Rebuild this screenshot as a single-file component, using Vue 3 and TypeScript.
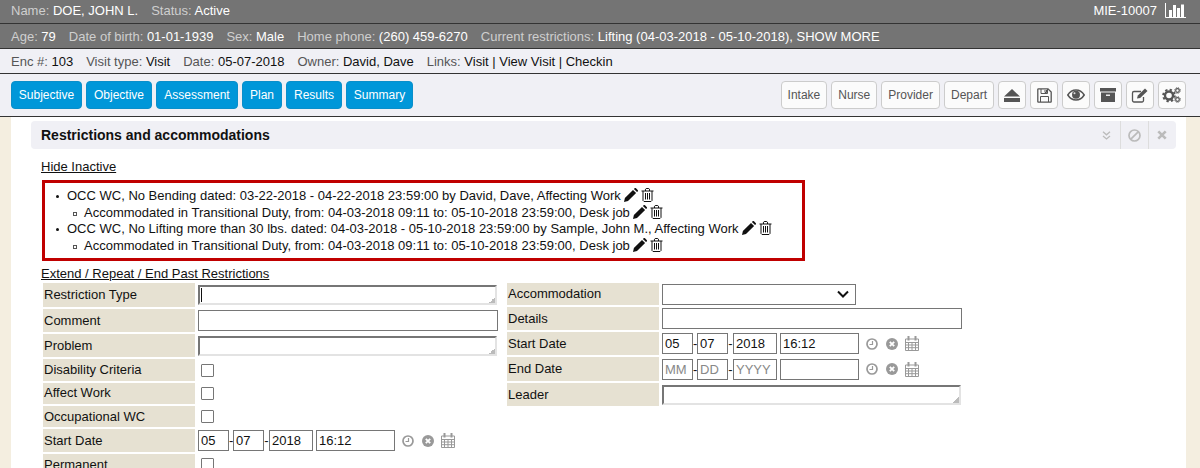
<template>
  <div class="page">
    <div class="banner">
      <div class="line dark first">
        <span>Name: <b>DOE, JOHN L.</b></span>
        <span>Status: <b>Active</b></span>
        <span class="mrn">MIE-10007</span>
        <svg class="chart" width="21" height="15" viewBox="0 0 21 15">
          <path d="M.5 0v14.500H21" fill="none" stroke="#fff" />
          <path d="M4 7h3v7H4zM8 2h3v12H8zM12 5h3v9h-3zM16 1.500h3V14h-3z" fill="#fff" />
        </svg>
      </div>
      <div class="line dark second">
        <span>Age: <b>79</b></span>
        <span>Date of birth: <b>01-01-1939</b></span>
        <span>Sex: <b>Male</b></span>
        <span>Home phone: <b>(260) 459-6270</b></span>
        <span>Current restrictions: <b>Lifting (04-03-2018 - 05-10-2018), SHOW MORE</b></span>
      </div>
      <div class="line light">
        <span>Enc #: <b>103</b></span>
        <span>Visit type: <b>Visit</b></span>
        <span>Date: <b>05-07-2018</b></span>
        <span>Owner: <b>David, Dave</b></span>
        <span>Links: <b>Visit | View Visit | Checkin</b></span>
      </div>
    </div>

    <div class="toolbar">
      <button v-for="tab in tabs" :key="tab.label" class="tab" :style="{ width: tab.width + 'px' }">
        {{ tab.label }}
      </button>
      <span class="spacer"></span>
      <button v-for="step in steps" :key="step" class="tool">{{ step }}</button>
      <button class="tool icon">
        <svg width="16" height="13" viewBox="0 0 16 13"><path d="M8 0l8 7.500H0zM0 9h16v4H0z" fill="#555" /></svg>
      </button>
      <button class="tool icon">
        <svg width="15" height="15" viewBox="0 0 15 15">
          <path d="M1.500.8h9.500l3.200 3.200v9.500a.7.7 0 0 1-.7.7h-12a.7.7 0 0 1-.7-.7v-12a.7.7 0 0 1 .7-.7z" fill="none" stroke="#555" stroke-width="1.300" />
          <path d="M4 1v4.500h6.500V1M3.500 14V8.500h8V14M8 2v2.500h1.500V2" fill="none" stroke="#555" />
        </svg>
      </button>
      <button class="tool icon">
        <svg width="18" height="12" viewBox="0 0 18 12">
          <path d="M.8 6C2.800 2.800 5.800 1 9 1s6.200 1.800 8.200 5c-2 3.200-5 5-8.200 5S2.800 9.200.8 6z" fill="none" stroke="#555" stroke-width="1.500" />
          <circle cx="9" cy="5.700" r="4" fill="#555" />
          <circle cx="7.500" cy="4.300" r="1" fill="#ddd" />
        </svg>
      </button>
      <button class="tool icon">
        <svg width="16" height="14" viewBox="0 0 16 14"><path d="M0 0h16v3.500H0zM1 4.500h14V14H1z" fill="#555" /><path d="M6 6.500h4V8H6z" fill="#eee" /></svg>
      </button>
      <button class="tool icon">
        <svg width="18" height="15" viewBox="0 0 18 15">
          <path d="M12.500 9v3.500a1.500 1.500 0 0 1-1.500 1.500H3a1.500 1.500 0 0 1-1.500-1.500V5A1.500 1.500 0 0 1 3 3.500h7" fill="none" stroke="#555" stroke-width="1.300" />
          <path d="M6 10.500l.8-3L14 .5l2.500 2.500-7.300 7z" fill="#555" />
        </svg>
      </button>
      <button class="tool icon">
        <svg width="20" height="16" viewBox="0 0 20 16">
          <circle cx="7" cy="8.500" r="4" fill="none" stroke="#555" stroke-width="2.400" />
          <circle cx="7" cy="8.500" r="5.800" fill="none" stroke="#555" stroke-width="2" stroke-dasharray="2.300 2.250" />
          <circle cx="15.500" cy="3.500" r="1.800" fill="none" stroke="#555" stroke-width="1.200" />
          <circle cx="15.500" cy="3.500" r="2.800" fill="none" stroke="#555" stroke-width="1" stroke-dasharray="1.200 1.000" />
          <circle cx="15.500" cy="12.500" r="1.800" fill="none" stroke="#555" stroke-width="1.200" />
          <circle cx="15.500" cy="12.500" r="2.800" fill="none" stroke="#555" stroke-width="1" stroke-dasharray="1.200 1.000" />
        </svg>
      </button>
    </div>

    <div class="body">
      <div class="sheet">
        <div class="heading">
          <h2>Restrictions and accommodations</h2>
          <span class="head-btn chevrons">
            <svg width="9" height="9" viewBox="0 0 9 9"><path d="M1 .8l3.500 3 3.500-3M1 5l3.500 3L8 5" fill="none" stroke="#bbb" stroke-width="1.300" /></svg>
          </span>
          <span class="head-btn">
            <svg width="13" height="13" viewBox="0 0 13 13"><circle cx="6.500" cy="6.500" r="5.500" fill="none" stroke="#bbb" stroke-width="1.700" /><path d="M2.800 10.200l7.400-7.400" stroke="#bbb" stroke-width="1.700" /></svg>
          </span>
          <span class="head-btn">
            <svg width="10" height="10" viewBox="0 0 10 10"><path d="M1.300 1.300l7.400 7.400M8.700 1.300L1.300 8.700" stroke="#bbb" stroke-width="2.600" /></svg>
          </span>
        </div>

        <a class="link hide">Hide Inactive</a>

        <ul class="history">
          <li v-for="(item, i) in history" :key="i" :class="{ sub: item.sub }">
            {{ item.text }}
            <span class="row-icons">
              <svg width="14" height="14" viewBox="0 0 14 14">
                <path d="M0 14l.9-4L9 1.900l3.100 3.100L4 13.100zM9.900 1l.7-.7a1 1 0 0 1 1.400 0l1.700 1.700a1 1 0 0 1 0 1.400l-.7.7z" fill="#111" />
              </svg>
              <svg width="13" height="14" viewBox="0 0 13 14">
                <path d="M.5 3h12M4.500 3V1.200l.7-.7h2.600l.7.7V3M2 3v9.500l1 1h7l1-1V3M4.500 5v6.500M6.500 5v6.500M8.500 5v6.500" fill="none" stroke="#111" />
              </svg>
            </span>
          </li>
        </ul>

        <a class="link extend">Extend / Repeat / End Past Restrictions</a>

        <div class="form">
          <div v-for="col in columns" :key="col.name" class="col" :class="col.name">
            <div v-for="row in col.rows" :key="row.label" class="row" :style="{ height: row.height + 'px' }">
              <label :class="{ raised: row.raised }">{{ row.label }}</label>

              <div v-if="row.kind === 'area'" class="area-wrap">
                <textarea class="area"></textarea>
                <span v-if="row.focused" class="caret"></span>
              </div>
              <input v-else-if="row.kind === 'text'" class="wide" />
              <input v-else-if="row.kind === 'check'" class="check" type="checkbox" />
              <div v-else-if="row.kind === 'select'" class="select">
                <svg width="12" height="8" viewBox="0 0 12 8"><path d="M1 1.500l5 5 5-5" fill="none" stroke="#111" stroke-width="2" /></svg>
              </div>
              <div v-else class="date">
                <input class="part mm" :value="row.date?.[0]" placeholder="MM" />
                <i class="d1">-</i>
                <input class="part mm" :value="row.date?.[1]" placeholder="DD" />
                <i class="d2">-</i>
                <input class="part yy" :value="row.date?.[2]" placeholder="YYYY" />
                <input class="part tt" :value="row.date?.[3]" />
                <svg class="clock" width="12" height="12" viewBox="0 0 12 12">
                  <circle cx="6" cy="6" r="5" fill="none" stroke="#999" stroke-width="1.700" />
                  <path d="M6.500 3v3.500H3.500" fill="none" stroke="#999" stroke-width="1.200" />
                </svg>
                <svg class="clear" width="12" height="12" viewBox="0 0 12 12">
                  <circle cx="6" cy="6" r="6" fill="#999" />
                  <path d="M3.800 3.800l4.400 4.400M8.200 3.800L3.800 8.200" stroke="#fff" stroke-width="1.800" />
                </svg>
                <svg class="cal" width="14" height="15" viewBox="0 0 14 15">
                  <path d="M.5 3h13v11.500H.5zM.5 6.500h13M.5 9h13M.5 11.700h13M3.500 6.500v8M7 6.500v8M10.500 6.500v8" fill="none" stroke="#999" />
                  <path d="M2.500 0h2v4.500h-2zM9.500 0h2v4.500h-2z" fill="#999" />
                </svg>
              </div>
            </div>
          </div>
        </div>
      </div>
    </div>
  </div>
</template>

<script setup lang="ts">
interface FormRow {
  label: string;
  kind: "area" | "text" | "check" | "select" | "date";
  height: number;
  focused?: boolean;
  raised?: boolean;
  date?: string[];
}

const tabs = [
  { label: "Subjective", width: 71 },
  { label: "Objective", width: 66 },
  { label: "Assessment", width: 82 },
  { label: "Plan", width: 40 },
  { label: "Results", width: 56 },
  { label: "Summary", width: 67 },
];
const steps = ["Intake", "Nurse", "Provider", "Depart"];

const accommodated =
  "Accommodated in Transitional Duty, from: 04-03-2018 09:11 to: 05-10-2018 23:59:00, Desk job";
const history = [
  { text: "OCC WC, No Bending dated: 03-22-2018 - 04-22-2018 23:59:00 by David, Dave, Affecting Work", sub: false },
  { text: accommodated, sub: true },
  { text: "OCC WC, No Lifting more than 30 lbs. dated: 04-03-2018 - 05-10-2018 23:59:00 by Sample, John M., Affecting Work", sub: false },
  { text: accommodated, sub: true },
];

const today = ["05", "07", "2018", "16:12"];
const leftRows: FormRow[] = [
  { label: "Restriction Type", kind: "area", height: 24, focused: true, raised: true },
  { label: "Comment", kind: "text", height: 23 },
  { label: "Problem", kind: "area", height: 23 },
  { label: "Disability Criteria", kind: "check", height: 22, raised: true },
  { label: "Affect Work", kind: "check", height: 21, raised: true },
  { label: "Occupational WC", kind: "check", height: 21 },
  { label: "Start Date", kind: "date", height: 23, date: today },
  { label: "Permanent", kind: "check", height: 21 },
];
const rightRows: FormRow[] = [
  { label: "Accommodation", kind: "select", height: 22, raised: true },
  { label: "Details", kind: "text", height: 23 },
  { label: "Start Date", kind: "date", height: 23, date: today },
  { label: "End Date", kind: "date", height: 24, date: ["", "", "", ""], raised: true },
  { label: "Leader", kind: "area", height: 23 },
];
const columns = [
  { name: "left", rows: leftRows },
  { name: "right", rows: rightRows },
];
</script>

<style>
html,
body {
  margin: 0;
  background: #fff;
  overflow: hidden;
}
</style>

<style scoped>
.page {
  width: 1200px;
  height: 468px;
  overflow: hidden;
  font-family: "Liberation Sans", Arial, sans-serif;
  font-size: 13px;
  color: #111;
}

.line {
  display: flex;
  align-items: center;
  gap: 13px;
  padding: 0 14px 0 11px;
  box-sizing: border-box;
  border-bottom: 1px solid #333;
}

.line b {
  font-weight: normal;
}

.dark {
  background: #747474;
  color: #cfcfcf;
}

.dark b {
  color: #fff;
}

.first {
  height: 24px;
  padding-bottom: 2px;
}

.second {
  height: 25px;
}

.light {
  height: 25px;
  background: #f0f0f5;
  color: #555;
}

.light b {
  color: #111;
}

.mrn {
  margin-left: auto;
  color: #fff;
}

.chart {
  margin-left: -5px;
}

.toolbar {
  display: flex;
  align-items: center;
  gap: 4px;
  height: 43px;
  box-sizing: border-box;
  padding: 0 14px 0 11px;
  background: #f0f0f5;
  border-bottom: 1px solid #333;
  font-size: 12px;
}

.spacer {
  flex: 1;
}

button {
  height: 28px;
  box-sizing: border-box;
  font: inherit;
  padding: 0;
  border-radius: 4px;
}

.tab {
  background: #0097d9;
  border: 1px solid #0a8fca;
  color: #fff;
}

.tool {
  padding: 0 6px;
  background: #fbfbfb;
  border: 1px solid #ccc;
  color: #555;
}

.tool.icon {
  width: 28px;
  padding: 0;
  display: flex;
  align-items: center;
  justify-content: center;
}

.body {
  padding: 0 14px 0 11px;
  background: #f4eee0;
}

.sheet {
  background: #fff;
  padding: 4px 10px 0 20px;
  height: 351px;
}

.heading {
  display: flex;
  align-items: center;
  height: 28px;
  padding-left: 10px;
  background: #f0f0f5;
  border-radius: 4px;
}

.heading h2 {
  flex: 1;
  margin: 0;
  font-size: 14px;
  font-weight: bold;
}

.head-btn {
  display: flex;
  align-items: center;
  justify-content: center;
  width: 28px;
  height: 28px;
  padding-right: 1px;
  border-left: 1px solid #ddd;
  box-sizing: border-box;
}

.head-btn.chevrons {
  border-left: 0;
  padding-right: 0;
}

.link {
  display: block;
  text-decoration: underline;
  line-height: 16px;
  color: #111;
}

.hide {
  margin: 10px 0 5px 10px;
}

.history {
  box-sizing: border-box;
  width: 763px;
  height: 81px;
  margin: 0 0 0 11px;
  border: 3px solid #c00000;
  padding: 5px 0 0 22px;
  list-style: none;
  line-height: 16.500px;
}

.history li {
  position: relative;
}

.history li::before {
  content: "";
  position: absolute;
  left: -11px;
  top: 7px;
  width: 3px;
  height: 3px;
  border-radius: 50%;
  background: #111;
}

.history li.sub {
  padding-left: 17px;
}

.history li.sub::before {
  left: 6px;
  width: 2px;
  height: 2px;
  border-radius: 0;
  background: #fff;
  border: 1px solid #555;
  box-sizing: content-box;
  top: 7px;
}

.row-icons {
  display: inline-flex;
  gap: 3px;
  vertical-align: -2px;
}

.extend {
  margin: 5px 0 1px 10px;
}

.form {
  display: flex;
  gap: 9px;
  margin-left: 12px;
}

.col {
  display: flex;
  flex-direction: column;
  gap: 2px;
}

.left {
  width: 455px;
}

.row {
  display: flex;
  align-items: center;
  gap: 3px;
}

.row label {
  align-self: stretch;
  display: flex;
  align-items: center;
  width: 152px;
  padding-left: 1px;
  box-sizing: border-box;
  background: #e6e1d2;
  flex: none;
}

.row label.raised {
  padding-bottom: 2px;
}

input,
textarea {
  font: inherit;
  color: #111;
  box-sizing: border-box;
  margin: 0;
  background: #fff;
  outline: none;
}

.wide {
  width: 300px;
  height: 21px;
  border: 1px solid #767676;
  padding: 0 2px;
}

.area-wrap {
  position: relative;
  display: flex;
}

.area {
  display: block;
  width: 299px;
  height: 20px;
  padding: 0;
  resize: none;
  overflow: hidden;
  border-style: solid;
  border-width: 2px;
  border-color: #767676 #e3e3e3 #e3e3e3 #767676;
  background: linear-gradient(135deg, transparent 50%, #bbb 50%) no-repeat right bottom / 6px 6px #fff;
}

.caret {
  position: absolute;
  left: 3px;
  top: 3px;
  width: 1px;
  height: 14px;
  background: #111;
}

.check {
  appearance: none;
  width: 13px;
  height: 13px;
  margin-left: 3px;
  border: 1px solid #767676;
  border-radius: 1px;
}

.select {
  display: flex;
  align-items: center;
  justify-content: flex-end;
  width: 194px;
  height: 21px;
  padding-right: 6px;
  box-sizing: border-box;
  border: 1px solid #767676;
}

.date {
  display: flex;
  align-items: center;
}

.date i {
  font-style: normal;
  text-align: center;
  line-height: 1;
}

.d1 {
  width: 4px;
}

.d2 {
  width: 5px;
}

.part {
  height: 21px;
  border: 1px solid #767676;
  padding: 0 2px;
}

.part::placeholder {
  color: #888;
}

.mm {
  width: 31px;
}

.yy {
  width: 44px;
}

.tt {
  width: 79px;
  margin-left: 3px;
}

.clock {
  margin-left: 7px;
}

.clear {
  margin-left: 8px;
}

.cal {
  margin-left: 7px;
}
</style>
